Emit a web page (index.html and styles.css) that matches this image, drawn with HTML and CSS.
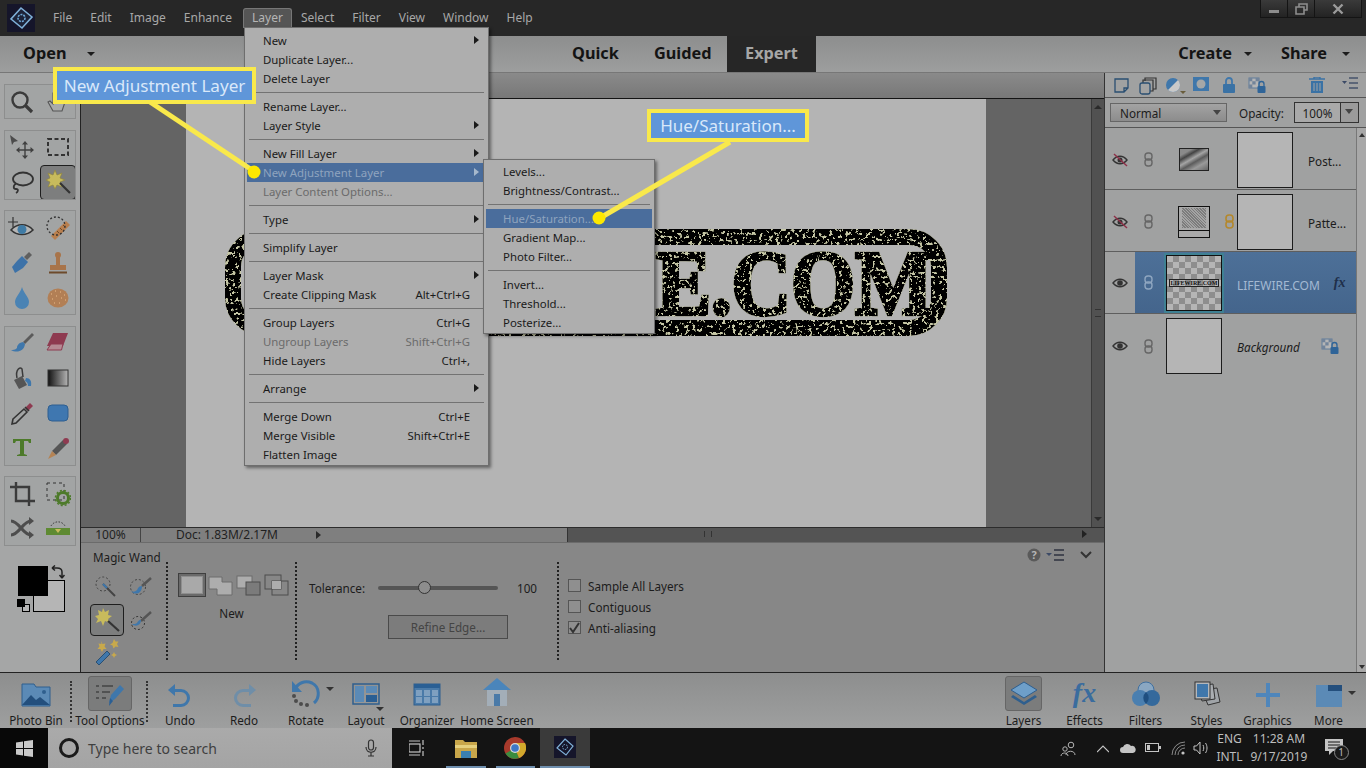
FILE: index.html
```html
<!DOCTYPE html>
<html lang="en">
<head>
<meta charset="utf-8">
<title>Photoshop Elements - Layer menu</title>
<link rel="stylesheet" href="styles.css">
</head>
<body>
<div class="app">
  <header class="titlebar">
    <div class="logo"><svg width="28" height="28" viewBox="0 0 28 28"><rect width="28" height="28" fill="#15152a"/><path d="M14 4 25 13 15 24 4 15Z" fill="#1c2238" stroke="#7fb0d8" stroke-width="1.6"/><circle cx="14.500" cy="14" r="3.500" fill="none" stroke="#6fa8d8" stroke-width="1.600" stroke-dasharray="2 1"/></svg></div>
    <nav class="mainmenu">
      <span class="mi">File</span><span class="mi">Edit</span><span class="mi">Image</span><span class="mi">Enhance</span><span class="mi active">Layer</span><span class="mi">Select</span><span class="mi">Filter</span><span class="mi">View</span><span class="mi">Window</span><span class="mi">Help</span>
    </nav>
    <div class="winctl">
      <span class="wb wb-min"><svg width="12" height="10" viewBox="0 0 12 10"><rect x="1" y="6" width="10" height="3" fill="#8d8d8d"/></svg></span>
      <span class="wb wb-max"><svg width="13" height="12" viewBox="0 0 13 12"><path d="M4 1h8v6H9V4H4Z M1 4h8v7H1Z" fill="none" stroke="#8d8d8d" stroke-width="1.600"/></svg></span>
      <span class="wb wb-close"><svg width="12" height="12" viewBox="0 0 12 12"><path d="M1.500 1.500 10.500 10.500M10.500 1.500 1.500 10.500" stroke="#9a9a9a" stroke-width="2.400"/></svg></span>
    </div>
  </header>

  <div class="modebar">
    <div class="open"><span class="mode-text">Open</span><span class="caret-d open-caret"></span></div>
    <div class="modes">
      <span class="mode mode-quick">Quick</span><span class="mode mode-guided">Guided</span><span class="mode expert">Expert</span>
    </div>
    <div class="create"><span class="mode-text">Create</span><span class="caret-d"></span></div>
    <div class="share"><span class="mode-text">Share</span><span class="caret-d"></span></div>
  </div>

  <div class="workspace">
    <aside class="toolbox">
      <div class="toolgroup">
        <span class="tool"><svg width="26" height="26" viewBox="0 0 26 26"><circle cx="11" cy="11" r="7.500" fill="#a8aaaa" stroke="#3b3b3b" stroke-width="2.400"/><path d="M16.500 16.500 23 23" stroke="#3b3b3b" stroke-width="3.200"/></svg></span>
        <span class="tool"><svg width="26" height="26" viewBox="0 0 26 26"><path d="M8 22 3 13l2-1 3 3V4h2v8l1-9h2l1 9 2-7h2l-1 9 3-1-3 9Z" fill="#a9abab" stroke="#555" stroke-width="1.100"/></svg></span>
      </div>
      <div class="toolgroup">
        <span class="tool"><svg width="26" height="26" viewBox="0 0 26 26"><path d="M1 1 9 7 5 8 3 11Z" fill="#4c4c4c"/><path d="M16 10v12M10 16h12" stroke="#404040" stroke-width="1.400"/><path d="M16 7l-3 3.500h6ZM16 25l-3-3.500h6ZM7 16l3.500-3v6ZM25 16l-3.500-3v6Z" fill="#404040"/></svg></span>
        <span class="tool"><svg width="26" height="26" viewBox="0 0 26 26"><rect x="3" y="5" width="20" height="16" fill="none" stroke="#333" stroke-width="2" stroke-dasharray="4 2.500"/></svg></span>
        <span class="tool"><svg width="26" height="26" viewBox="0 0 26 26"><ellipse cx="14" cy="10" rx="10" ry="6.500" fill="none" stroke="#333" stroke-width="1.800"/><path d="M7 15c-3 1-3 5 0 5s2 3 0 4" fill="none" stroke="#333" stroke-width="1.800"/></svg></span>
        <span class="tool selected"><svg width="26" height="26" viewBox="0 0 26 26"><path d="M10 1 12 6 17 4 15 9 20 11 15 13 17 18 12 16 10 20 8 16 3 18 5 13 1 11 5 9 3 4 8 6Z" fill="#c8bb5c" stroke="#8f8540" stroke-width=".7"/><path d="M15 14 25 24" stroke="#333" stroke-width="2.200"/></svg></span>
      </div>
      <div class="toolgroup">
        <span class="tool"><svg width="28" height="26" viewBox="0 0 28 26"><path d="M5 2v10M0 7h10" stroke="#333" stroke-width="1.200"/><path d="M3 15c6-7 16-7 22 0-6 6-16 6-22 0Z" fill="#b5b5b5" stroke="#333" stroke-width="1.500"/><circle cx="14" cy="14.500" r="4.500" fill="#3f7ba5"/></svg></span>
        <span class="tool"><svg width="26" height="26" viewBox="0 0 26 26"><path d="M6 21 21 6l4 4-15 15Z" fill="#b97f4e"/><path d="M12 16l2 2M15 13l2 2M18 10l2 2" stroke="#6d4a2b"/><circle cx="11" cy="11" r="9" fill="none" stroke="#333" stroke-dasharray="2 2" stroke-width="1.300"/></svg></span>
        <span class="tool"><svg width="26" height="26" viewBox="0 0 26 26"><path d="M15 7 20 2l3 3-5 5Z" fill="#5f5f5f"/><path d="M8 11 13 6l6 6-5 6-8 5-3-6Z" fill="#3d72a8"/></svg></span>
        <span class="tool"><svg width="26" height="26" viewBox="0 0 26 26"><circle cx="13" cy="5" r="3" fill="#a8744a"/><rect x="11" y="7" width="4" height="8" fill="#a8744a"/><rect x="5" y="15" width="16" height="5" fill="#a8744a"/><rect x="4" y="21.500" width="18" height="2" fill="#6d4a2b"/></svg></span>
        <span class="tool"><svg width="26" height="26" viewBox="0 0 26 26"><path d="M13 2C11 9 6 12 6 17a7 7 0 0 0 14 0C20 12 15 9 13 2Z" fill="#4a83b4"/></svg></span>
        <span class="tool"><svg width="28" height="26" viewBox="0 0 28 26"><ellipse cx="14" cy="13" rx="10.500" ry="9.500" fill="#b27f55"/><path d="M7 9h1M11 6h1M16 7h1M20 10h1M8 14h1M12 11h1M17 13h1M21 15h1M10 18h1M15 18h1" stroke="#d8a878" stroke-width="1.600"/></svg></span>
      </div>
      <div class="toolgroup">
        <span class="tool"><svg width="26" height="26" viewBox="0 0 26 26"><path d="M14 12 23 3l2 2-9 9Z" fill="#5b5b5b"/><path d="M14 12c-5 1-6 4-6 6-2 2-4 2-6 2 5 3 13 2 14-6Z" fill="#3f77ab"/></svg></span>
        <span class="tool"><svg width="26" height="26" viewBox="0 0 26 26"><path d="M8 3h15l-5 13H2Z" fill="#8e3a50"/><path d="M6 14h12l-1.500 6H2Z" fill="#b58a94" stroke="#8e3a50"/></svg></span>
        <span class="tool"><svg width="26" height="26" viewBox="0 0 26 26"><path d="M5 15 13 11l5 9-8 4Z" fill="#555"/><path d="M8 13C6 4 12 1 13 4l1 8" fill="none" stroke="#3b3b3b" stroke-width="1.500"/><path d="M17 13c4 0 6 3 5 8h-3c0-3-1-4-3-5Z" fill="#3f77ab"/></svg></span>
        <span class="tool"><svg width="22" height="18" viewBox="0 0 22 18"><defs><linearGradient id="gr"><stop offset="0" stop-color="#111"/><stop offset="1" stop-color="#b5b5b5"/></linearGradient></defs><rect x="1" y="1" width="20" height="16" fill="url(#gr)" stroke="#333"/></svg></span>
        <span class="tool"><svg width="26" height="26" viewBox="0 0 26 26"><path d="M16 8 21 3l3 3-5 5Z" fill="#8e3a50"/><path d="M16 7l4 4M4 19 15 9l3 3L7 23l-4 1Z" fill="none" stroke="#333" stroke-width="1.600"/></svg></span>
        <span class="tool"><svg width="24" height="20" viewBox="0 0 24 20"><rect x="2" y="2" width="20" height="16" rx="4" fill="#3f77b0" stroke="#2f5f90"/></svg></span>
        <span class="tool"><svg width="26" height="26" viewBox="0 0 26 26"><path d="M4 8V4h18v4h-2l-1-2h-4v13l3 1v1H8v-1l3-1V6H7L6 8Z" fill="#4d7a2a"/></svg></span>
        <span class="tool"><svg width="26" height="26" viewBox="0 0 26 26"><path d="M7 16 18 5l4 4L11 20Z" fill="#555"/><circle cx="21" cy="6" r="3" fill="#8e3a50"/><path d="M7 16l4 4-8 4Z" fill="#b58354"/></svg></span>
      </div>
      <div class="toolgroup">
        <span class="tool"><svg width="26" height="26" viewBox="0 0 26 26"><path d="M7 1v19h19M1 6h19v19" fill="none" stroke="#3b3b3b" stroke-width="2.400"/></svg></span>
        <span class="tool"><svg width="26" height="26" viewBox="0 0 26 26"><rect x="2" y="2" width="17" height="17" fill="none" stroke="#333" stroke-dasharray="3 3"/><circle cx="18" cy="17" r="5.500" fill="none" stroke="#4d7a2a" stroke-width="3"/><circle cx="18" cy="17" r="7.500" fill="none" stroke="#4d7a2a" stroke-width="1.600" stroke-dasharray="2 2"/></svg></span>
        <span class="tool"><svg width="26" height="26" viewBox="0 0 26 26"><path d="M2 5c8 0 12 14 20 14M2 19c8 0 12-14 20-14" fill="none" stroke="#4d4d4d" stroke-width="3.200"/><path d="M20 1l5 4-5 4ZM20 15l5 4-5 4Z" fill="#4d4d4d"/></svg></span>
        <span class="tool"><svg width="26" height="26" viewBox="0 0 26 26"><rect x="1" y="12" width="24" height="7" fill="#5e8a32"/><path d="M10 13h6l-3 4Z" fill="#c8bb5c"/><path d="M6 10a8 8 0 0 1 14 0" fill="none" stroke="#333" stroke-dasharray="1.500 1.500"/></svg></span>
      </div>
      <div class="swatches">
        <span class="bg-color"></span><span class="fg-color"></span>
        <span class="reset-a"></span><span class="reset-b"></span>
        <svg class="swap" width="14" height="14" viewBox="0 0 14 14"><path d="M1 3h5M1 3l3-2.500M1 3l3 2.500M11 13V7M11 13l-2.500-3M11 13l2.500-3M6 3c3 0 5 1 5 4" fill="none" stroke="#222" stroke-width="1.500"/></svg>
      </div>
    </aside>

    <main class="center">
      <div class="tabstrip"></div>
      <div class="canvas-row">
        <div class="canvas">
          <div class="image">
            <svg class="stamp" width="800" height="429" viewBox="0 0 800 429">
              <defs>
                <filter id="distress" filterUnits="userSpaceOnUse" x="0" y="0" width="800" height="429">
                  <feTurbulence type="fractalNoise" baseFrequency=".3" numOctaves="4" seed="7" result="n"/>
                  <feColorMatrix in="n" type="matrix" values="0 0 0 0 0  0 0 0 0 0  0 0 0 0 0  0 0 0 -14 9.300" result="a"/>
                  <feComposite in="SourceGraphic" in2="a" operator="in" result="ink"/>
                  <feFlood flood-color="#c6c7a6" result="c"/>
                  <feComposite in="c" in2="SourceAlpha" operator="in" result="paper"/>
                  <feMerge><feMergeNode in="paper"/><feMergeNode in="ink"/></feMerge>
                </filter>
              </defs>
              <g filter="url(#distress)">
                <rect x="47" y="138" width="706" height="91" rx="30" class="stamp-frame"/>
                <text x="470" y="215" textLength="277" lengthAdjust="spacingAndGlyphs" class="stamp-text">E.COM</text>
              </g>
            </svg>
          </div>
        </div>
        <div class="vscroll"><span class="v-up"></span><span class="v-grip"></span><span class="v-down"></span></div>
      </div>
      <div class="statusbar">
        <span class="zoom-box">100%</span>
        <span class="doc-box">Doc: 1.83M/2.17M</span>
        <span class="doc-arrow"></span>
        <div class="hscroll"><span class="h-grip"></span><span class="h-arrow"></span></div>
      </div>
      <section class="options">
        <div class="opt-section opt-wand">
          <div class="opt-title">Magic Wand</div>
          <div class="wand-grid">
            <span class="wand"><svg width="24" height="24" viewBox="0 0 24 24"><circle cx="8" cy="8" r="7" fill="none" stroke="#444" stroke-dasharray="2 2"/><path d="M8 8 20 20" stroke="#444" stroke-width="2"/><path d="M8 8l4 4" stroke="#3f77ab" stroke-width="2"/></svg></span>
            <span class="wand"><svg width="24" height="24" viewBox="0 0 24 24"><circle cx="9" cy="11" r="7.500" fill="none" stroke="#444" stroke-dasharray="2 2"/><path d="M13 10 22 2" stroke="#555" stroke-width="2.400"/><path d="M13 10c-4 0-4 3-5 4-2 2-4 2-6 1 3 4 11 4 11-5Z" fill="#3f77ab"/></svg></span>
            <span class="wand selected"><svg width="26" height="26" viewBox="0 0 26 26"><path d="M9 1l2 4 4-2-1 5 4 1-4 3 2 4-5-2-2 5-2-5-5 2 2-4-3-3 4-1-1-5 4 2Z" fill="#c8bb5c"/><path d="M14 14 25 24" stroke="#333" stroke-width="2.200"/></svg></span>
            <span class="wand"><svg width="24" height="24" viewBox="0 0 24 24"><circle cx="9" cy="15" r="6.500" fill="none" stroke="#333" stroke-dasharray="2 2"/><path d="M12 13 22 4" stroke="#555" stroke-width="2.400"/><path d="M12 12c-3 0-3 2-4 3-1 1-3 1-5 1 3 3 9 2 9-4Z" fill="#3f77ab"/></svg></span>
            <span class="wand"><svg width="28" height="28" viewBox="0 0 28 28"><path d="M3 24 14 13l3 3L6 27Z" fill="#3f77ab" stroke="#2a4f72"/><path d="M8 3l1.500 3 3-.5-1 3 2 2.500-3 0-1.500 3-1.500-3-3 0 2-2.500-1-3 3 .5ZM21 1l1.500 2.500 3 0-1.500 2.500 1.500 3-3-.5-2 2-1-3-2.500-1 2.500-1.500ZM21 14l1 2 2 1-2 1-1 2-1-2-2-1 2-1Z" fill="#c8a94c"/></svg></span>
          </div>
        </div>
        <div class="opt-section opt-mode">
          <div class="mode-icons">
            <span class="mode-sel"><span class="mode-square"></span></span>
            <svg width="26" height="22" viewBox="0 0 26 22"><path d="M1 3h13v5h10v13H9v-6H1Z" fill="#adadad" stroke="#6d6d6d"/></svg>
            <svg width="26" height="22" viewBox="0 0 26 22"><rect x="1" y="2" width="15" height="12" fill="#adadad" stroke="#6d6d6d"/><rect x="10" y="8" width="14" height="13" fill="#7b7b7b" stroke="#4c4c4c"/></svg>
            <svg width="26" height="22" viewBox="0 0 26 22"><rect x="1" y="1" width="16" height="14" fill="none" stroke="#4c4c4c"/><rect x="8" y="7" width="16" height="14" fill="none" stroke="#4c4c4c"/><rect x="8" y="7" width="9" height="8" fill="#adadad"/></svg>
          </div>
          <div class="mode-label">New</div>
        </div>
        <div class="opt-section opt-tol">
          <div class="tol-row">
            <span class="tol-label">Tolerance:</span>
            <span class="slider"><span class="knob"></span></span>
            <span class="tol-val">100</span>
          </div>
          <button class="refine" type="button">Refine Edge...</button>
        </div>
        <div class="opt-section opt-checks">
          <label class="chk"><span class="box"></span>Sample All Layers</label>
          <label class="chk"><span class="box"></span>Contiguous</label>
          <label class="chk"><span class="box checked"><svg width="13" height="13" viewBox="0 0 13 13"><path d="M2 7 5 11 11 2" fill="none" stroke="#333" stroke-width="2"/></svg></span>Anti-aliasing</label>
        </div>
        <div class="opt-end">
          <svg width="14" height="14" viewBox="0 0 14 14"><circle cx="7" cy="7" r="6.500" fill="#5a5a5a"/><text x="7" y="11" class="qmark">?</text></svg>
          <svg width="20" height="14" viewBox="0 0 20 14"><path d="M0 5h6l-3 3Z" fill="#3c4a66"/><path d="M8 2h10M8 7h10M8 12h10" stroke="#2f3340" stroke-width="1.400"/></svg>
          <svg class="chev" width="12" height="8" viewBox="0 0 12 8"><path d="M1 1l5 5 5-5" fill="none" stroke="#333" stroke-width="2"/></svg>
        </div>
      </section>
    </main>

    <aside class="layers">
      <div class="panel-tools">
        <svg class="pt1" width="16" height="16" viewBox="0 0 16 16"><path d="M2 2h13v9l-4 4H2ZM15 11h-4v4" fill="none" stroke="#2a4f72" stroke-width="1.300"/></svg>
        <svg class="pt2" width="18" height="18" viewBox="0 0 18 18"><path d="M6 4V1h11v11h-3M4 6V3h10v11h-3" fill="none" stroke="#333" stroke-width="1.200"/><rect x="1" y="6" width="10" height="11" rx="2" fill="#a2a3a3" stroke="#2a4f72" stroke-width="1.300"/></svg>
        <svg class="pt3" width="22" height="18" viewBox="0 0 22 18"><circle cx="8" cy="8" r="7" fill="#3f77ab"/><path d="M3 13 13 3a7 7 0 0 1-10 10Z" fill="#c9c9c9"/><path d="M15 14h6l-3 3Z" fill="#695d3c"/></svg>
        <svg class="pt4" width="16" height="14" viewBox="0 0 16 14"><rect width="16" height="14" fill="#3f77ab"/><circle cx="8" cy="7" r="4.500" fill="#a5a7a7"/></svg>
        <svg class="pt5" width="14" height="16" viewBox="0 0 14 16"><path d="M4 7V4a3 3 0 0 1 6 0v3" fill="none" stroke="#3f77ab" stroke-width="1.800"/><rect x="1" y="7" width="12" height="9" rx="1" fill="#3a72a5"/></svg>
        <svg class="pt6" width="18" height="16" viewBox="0 0 18 16"><rect x="1" y="1" width="10" height="10" fill="#b5b5b5" stroke="#5f7d9b"/><path d="M1 1h3.300v3.300H1ZM7.600 1H11v3.300H7.600ZM4.300 4.300h3.300v3.300H4.300ZM1 7.600h3.300V11H1Z" fill="#72849a"/><path d="M11 9V7a2.500 2.500 0 0 1 5 0v2" fill="none" stroke="#2f6498" stroke-width="1.300"/><rect x="9.500" y="9" width="8" height="7" rx="1" fill="#2f6498"/></svg>
        <svg class="pt7" width="16" height="16" viewBox="0 0 16 16"><path d="M0 2h16M5 2V0h6v2" stroke="#3a72a5" stroke-width="1.400" fill="none"/><path d="M2 4h12v12H2Z" fill="#3a72a5"/><path d="M5 6v8M8 6v8M11 6v8" stroke="#a2a3a3"/></svg>
        <svg class="pt8" width="16" height="12" viewBox="0 0 16 12"><path d="M0 4h5L2.500 7Z" fill="#3c4a66"/><path d="M7 1h9M7 6h9M7 11h9" stroke="#46536b" stroke-width="1.300"/></svg>
      </div>
      <div class="blend-row">
        <span class="select">Normal<span class="sel-caret"></span></span>
        <span class="op-label">Opacity:</span>
        <span class="op-input">100%</span>
        <span class="op-drop"><span class="sel-caret"></span></span>
      </div>
      <div class="layer-list">
        <div class="rows">
          <div class="layer-row">
            <span class="eye-cell"><svg width="16" height="14" viewBox="0 0 16 14"><path d="M1 7c4-5 10-5 14 0-4 5-10 5-14 0Z" fill="none" stroke="#333" stroke-width="1.400"/><circle cx="8" cy="7" r="2.500" fill="#333"/><path d="M2 1 15 13" stroke="#8e3048" stroke-width="1.400"/></svg></span>
            <span class="chain-cell"><svg width="9" height="15" viewBox="0 0 9 15"><rect x="1" y="1" width="7" height="7" rx="3" fill="none" stroke="#666" stroke-width="1.400"/><rect x="1" y="7" width="7" height="7" rx="3" fill="none" stroke="#666" stroke-width="1.400"/></svg></span>
            <span class="thumb-cell"><span class="thumb-post"></span></span>
            <span class="link-cell"></span>
            <span class="mask-thumb"></span>
            <span class="lname">Post...</span>
          </div>
          <div class="layer-row">
            <span class="eye-cell"><svg width="16" height="14" viewBox="0 0 16 14"><path d="M1 7c4-5 10-5 14 0-4 5-10 5-14 0Z" fill="none" stroke="#333" stroke-width="1.400"/><circle cx="8" cy="7" r="2.500" fill="#333"/><path d="M2 1 15 13" stroke="#8e3048" stroke-width="1.400"/></svg></span>
            <span class="chain-cell"><svg width="9" height="15" viewBox="0 0 9 15"><rect x="1" y="1" width="7" height="7" rx="3" fill="none" stroke="#666" stroke-width="1.400"/><rect x="1" y="7" width="7" height="7" rx="3" fill="none" stroke="#666" stroke-width="1.400"/></svg></span>
            <span class="thumb-cell"><span class="thumb-pat"><span class="pat-noise"></span><span class="pat-bar"></span></span></span>
            <span class="link-cell"><svg width="9" height="15" viewBox="0 0 9 15"><rect x="1" y="1" width="7" height="7" rx="3" fill="none" stroke="#b4882c" stroke-width="1.600"/><rect x="1" y="7" width="7" height="7" rx="3" fill="none" stroke="#b4882c" stroke-width="1.600"/></svg></span>
            <span class="mask-thumb"></span>
            <span class="lname">Patte...</span>
          </div>
          <div class="layer-row active">
            <span class="eye-cell lit"><svg width="16" height="12" viewBox="0 0 16 12"><path d="M1 6c4-5 10-5 14 0-4 5-10 5-14 0Z" fill="none" stroke="#333" stroke-width="1.400"/><circle cx="8" cy="6" r="2.800" fill="#333"/></svg></span>
            <span class="chain-cell"><svg width="9" height="15" viewBox="0 0 9 15"><rect x="1" y="1" width="7" height="7" rx="3" fill="none" stroke="#8fa6c0" stroke-width="1.400"/><rect x="1" y="7" width="7" height="7" rx="3" fill="none" stroke="#8fa6c0" stroke-width="1.400"/></svg></span>
            <span class="thumb-cell"><span class="thumb-check"><span class="mini">LIFEWIRE.COM</span></span></span>
            <span class="link-cell"></span>
            <span class="lname lname-active">LIFEWIRE.COM</span>
            <span class="fx">fx</span>
          </div>
          <div class="layer-row">
            <span class="eye-cell"><svg width="16" height="12" viewBox="0 0 16 12"><path d="M1 6c4-5 10-5 14 0-4 5-10 5-14 0Z" fill="none" stroke="#333" stroke-width="1.400"/><circle cx="8" cy="6" r="2.800" fill="#333"/></svg></span>
            <span class="chain-cell"><svg width="9" height="15" viewBox="0 0 9 15"><rect x="1" y="1" width="7" height="7" rx="3" fill="none" stroke="#666" stroke-width="1.400"/><rect x="1" y="7" width="7" height="7" rx="3" fill="none" stroke="#666" stroke-width="1.400"/></svg></span>
            <span class="thumb-cell"><span class="thumb-bg"></span></span>
            <span class="link-cell"></span>
            <span class="lname lname-bg">Background</span>
            <svg class="bg-lock" width="18" height="16" viewBox="0 0 18 16"><rect x="1" y="1" width="10" height="10" fill="#b5b5b5" stroke="#5f7d9b"/><path d="M1 1h3.300v3.300H1ZM7.600 1H11v3.300H7.600ZM4.300 4.300h3.300v3.300H4.300ZM1 7.600h3.300V11H1Z" fill="#72849a"/><path d="M11 9V7a2.500 2.500 0 0 1 5 0v2" fill="none" stroke="#2f6498" stroke-width="1.300"/><rect x="9.500" y="9" width="8" height="7" rx="1" fill="#2f6498"/></svg>
          </div>
        </div>
        <div class="layers-scroll"><span class="ls-up"></span><span class="ls-down"></span></div>
      </div>
    </aside>
  </div>

  <footer class="bottombar">
    <div class="bb bb-photo"><svg width="30" height="24" viewBox="0 0 30 24"><path d="M1 3V1h12l2 3h14v19H1Z" fill="#5b8ab6" stroke="#2f5f8e"/><path d="M1 22 10 12l5 5 4-3 10 8Z" fill="#234f7d"/><circle cx="23" cy="9" r="2" fill="#2f5f8e"/></svg><span>Photo Bin</span></div>
    <div class="bb bb-tool"><span class="bb-sel"><svg width="30" height="24" viewBox="0 0 30 24"><path d="M1 4h3M1 10h3M1 16h3M7 4h11M7 10h8M7 16h4" stroke="#444" stroke-width="1.500"/><path d="M14 21l2-8 9-10 4 4-9 10Z" fill="#3f77ab"/><path d="M14 24l4-5-3-3Z" fill="#2a5f94"/></svg></span><span>Tool Options</span></div>
    <div class="bb bb-undo"><svg width="26" height="24" viewBox="0 0 26 24"><path d="M8 1 1 7l7 6V9h6a6 6 0 0 1 0 12H6v3h8a9 9 0 0 0 0-18H8Z" fill="#3f77ab"/></svg><span>Undo</span></div>
    <div class="bb bb-redo"><svg width="26" height="24" viewBox="0 0 26 24"><path d="M18 1l7 6-7 6V9h-6a6 6 0 0 0 0 12h8v3h-8a9 9 0 0 1 0-18h6Z" fill="#6f8ea8"/></svg><span>Redo</span></div>
    <div class="bb bb-rotate"><span class="with-caret"><svg width="32" height="28" viewBox="0 0 32 28"><path d="M5 11C7 4 15 1 22 4c8 4 8 15 2 20" fill="none" stroke="#3f77ab" stroke-width="3"/><path d="M2 2v11h10Z" fill="#3f77ab"/><circle cx="4" cy="17" r="2" fill="#4c4c4c"/><circle cx="6" cy="22" r="2" fill="#4c4c4c"/><circle cx="11" cy="25" r="2" fill="#4c4c4c"/><circle cx="17" cy="26" r="2" fill="#4c4c4c"/></svg><span class="caret-s rot-caret"></span></span><span>Rotate</span></div>
    <div class="bb bb-layout"><span class="with-caret"><svg width="28" height="24" viewBox="0 0 28 24"><rect x="1" y="1" width="26" height="20" fill="none" stroke="#2f5f8e" stroke-width="1.500"/><rect x="3" y="3" width="9" height="16" fill="#5b8ab6"/><rect x="14" y="3" width="11" height="7" fill="#5b8ab6"/><rect x="14" y="12" width="11" height="7" fill="#2a5f94"/></svg><span class="caret-s lay-caret"></span></span><span>Layout</span></div>
    <div class="bb bb-org"><svg width="28" height="24" viewBox="0 0 28 24"><rect x="1" y="1" width="26" height="21" fill="#4a7aa8" stroke="#2f5f8e"/><rect x="1" y="1" width="26" height="4" fill="#2a5f94"/><path d="M3 7h6v6H3ZM11 7h6v6h-6ZM19 7h6v6h-6ZM3 14h6v6H3ZM11 14h6v6h-6ZM19 14h6v6h-6Z" fill="#7fa0c0"/></svg><span>Organizer</span></div>
    <div class="bb bb-home"><svg width="30" height="30" viewBox="0 0 30 30"><path d="M1 13 15 1l14 12Z" fill="#4a85bb"/><path d="M5 13h20v16H5Z" fill="#a3aeb8"/><rect x="12" y="17" width="6" height="12" fill="#4a7aa8"/></svg><span>Home Screen</span></div>
    <div class="bb-spacer"></div>
    <div class="bb"><span class="bb-sel bb-sel-layers"><svg width="28" height="26" viewBox="0 0 28 26"><path d="M14 1 27 9 14 17 1 9Z" fill="#6e9fc9" stroke="#2f5f8e"/><path d="M3 14l11 7 11-7 2 2-13 8-13-8Z" fill="#2f5f8e"/></svg></span><span>Layers</span></div>
    <div class="bb"><span class="fx-big">fx</span><span>Effects</span></div>
    <div class="bb"><svg width="28" height="26" viewBox="0 0 28 26"><circle cx="14" cy="9" r="8" fill="#8aa7c2" stroke="#3f6f9f"/><circle cx="8" cy="17" r="8" fill="#4a7fb0"/><circle cx="20" cy="17" r="8" fill="#34699c"/><path d="M14 11a8 8 0 0 1 0 12 8 8 0 0 1 0-12Z" fill="#1f4f80"/></svg><span>Filters</span></div>
    <div class="bb"><svg width="28" height="26" viewBox="0 0 28 26"><path d="M9 9 24 7l3 14-12 3Z" fill="#a0a4a8" stroke="#333"/><path d="M5 5 20 3l2 15-13 2Z" fill="#a9adb1" stroke="#333"/><rect x="2" y="1" width="15" height="17" fill="#b4b7ba" stroke="#333"/><rect x="4" y="3" width="11" height="13" fill="#3f77ab"/></svg><span>Styles</span></div>
    <div class="bb"><svg width="24" height="24" viewBox="0 0 24 24"><path d="M10 0h4v10h10v4H14v10h-4V14H0v-4h10Z" fill="#4f86bb"/></svg><span>Graphics</span></div>
    <div class="bb"><span class="with-caret"><svg width="26" height="22" viewBox="0 0 26 22"><rect width="26" height="22" fill="#5b8ab6"/><rect x="12" width="14" height="6" fill="#244f7d"/></svg><span class="caret-s more-caret"></span></span><span>More</span></div>
  </footer>

  <div class="taskbar">
    <div class="start"><svg width="17" height="17" viewBox="0 0 17 17"><path d="M0 2.500 7 1.500V8H0ZM8 1.300 17 0V8H8ZM0 9h7v6.500L0 14.500ZM8 9h9v8l-9-1.300Z" fill="#c9c9c9"/></svg></div>
    <div class="search">
      <span class="cortana"></span>
      <span class="search-text">Type here to search</span>
      <svg class="mic" width="12" height="18" viewBox="0 0 12 18"><rect x="3.500" y="1" width="5" height="10" rx="2.500" fill="none" stroke="#333" stroke-width="1.200"/><path d="M1 8c0 7 10 7 10 0M6 13v4M3 17h6" fill="none" stroke="#333" stroke-width="1.200"/></svg>
    </div>
    <div class="tb-apps">
      <span class="tb-app"><svg width="16" height="16" viewBox="0 0 16 16"><rect x="0" y="4" width="11" height="8" fill="none" stroke="#c4c4c4" stroke-width="1.200"/><path d="M0 1h11M0 15h11M14 0v5M14 7v2M14 11v5" stroke="#c4c4c4" stroke-width="1.200"/></svg></span>
      <span class="tb-app under"><svg width="22" height="20" viewBox="0 0 22 20"><path d="M0 2h8l2 2h12v16H0Z" fill="#c8a64a"/><rect x="0" y="7" width="22" height="3" fill="#e5d07e"/><rect x="6" y="13" width="10" height="7" fill="#3a7fb0"/></svg></span>
      <span class="tb-app under"><svg width="22" height="22" viewBox="0 0 22 22"><circle cx="11" cy="11" r="11" fill="#a83a2c"/><path d="M11 11 1.500 16.500A11 11 0 0 0 15 21Z" fill="#3b8c3f"/><path d="M11 11l4 10A11 11 0 0 0 21 6H11Z" fill="#d2a92c"/><circle cx="11" cy="11" r="5" fill="#d8d8d8"/><circle cx="11" cy="11" r="3.800" fill="#3d78c8"/></svg></span>
      <span class="tb-app current"><svg width="22" height="22" viewBox="0 0 22 22"><rect width="22" height="22" fill="#15152a"/><path d="M11 3 19 10 12 19 3 12Z" fill="none" stroke="#7fb0d8" stroke-width="1.200"/><circle cx="11" cy="11" r="2.500" fill="none" stroke="#7fb0d8" stroke-dasharray="1.500 1"/></svg></span>
    </div>
    <div class="tray">
      <svg class="tr-people" width="16" height="16" viewBox="0 0 16 16"><circle cx="11" cy="4" r="2.800" fill="none" stroke="#b5b5b5"/><path d="M6 14c0-5 9-5 9 0" fill="none" stroke="#b5b5b5"/><circle cx="5" cy="8" r="2.200" fill="none" stroke="#b5b5b5"/><path d="M1 15c0-4 7-4 7 0" fill="none" stroke="#b5b5b5"/></svg>
      <svg class="tr-up" width="12" height="8" viewBox="0 0 12 8"><path d="M0 7l6-6 6 6" fill="none" stroke="#c4c4c4" stroke-width="1.200"/></svg>
      <svg class="tr-cloud" width="16" height="10" viewBox="0 0 16 10"><path d="M3 10a3 3 0 0 1 0-6 4.500 4.500 0 0 1 8-1 3.500 3.500 0 0 1 2 7Z" fill="#c4c4c4"/></svg>
      <svg class="tr-bat" width="16" height="9" viewBox="0 0 16 9"><rect x=".5" y=".5" width="13" height="8" fill="none" stroke="#c4c4c4"/><rect x="2" y="2" width="3" height="5" fill="#c4c4c4"/><rect x="14" y="3" width="2" height="3" fill="#c4c4c4"/></svg>
      <svg class="tr-wifi" width="14" height="14" viewBox="0 0 14 14"><path d="M1 14A13 13 0 0 1 14 1M4 14A10 10 0 0 1 14 4M7 14a7 7 0 0 1 7-7" fill="none" stroke="#8a8a8a"/><circle cx="12" cy="12" r="1.600" fill="#c4c4c4"/></svg>
      <svg class="tr-vol" width="16" height="14" viewBox="0 0 16 14"><path d="M1 5h2.500L7 1v12L3.500 9H1Z" fill="none" stroke="#c4c4c4"/><path d="M10 4c1 2 1 4 0 6M12.500 2c2 3 2 7 0 10" fill="none" stroke="#c4c4c4"/></svg>
      <div class="tr-lang"><span>ENG</span><span>INTL</span></div>
      <div class="tr-clock"><span>11:28 AM</span><span>9/17/2019</span></div>
      <span class="tr-note"><svg width="18" height="16" viewBox="0 0 18 16"><path d="M0 0h18v12H8l-4 4v-4H0Z" fill="#c4c4c4"/><path d="M3 3h12M3 6h12M3 9h8" stroke="#141414"/></svg><span class="note-badge">1</span></span>
    </div>
  </div>

  <div class="layer-tab">Layer</div>
  <div class="menu layer-menu">
    <div class="row sub">New</div>
    <div class="row">Duplicate Layer...</div>
    <div class="row">Delete Layer</div>
    <div class="sep"></div>
    <div class="row">Rename Layer...</div>
    <div class="row sub">Layer Style</div>
    <div class="sep"></div>
    <div class="row sub">New Fill Layer</div>
    <div class="row sub hl">New Adjustment Layer</div>
    <div class="row off">Layer Content Options...</div>
    <div class="sep"></div>
    <div class="row sub">Type</div>
    <div class="sep"></div>
    <div class="row">Simplify Layer</div>
    <div class="sep"></div>
    <div class="row sub">Layer Mask</div>
    <div class="row">Create Clipping Mask<kbd>Alt+Ctrl+G</kbd></div>
    <div class="sep"></div>
    <div class="row">Group Layers<kbd>Ctrl+G</kbd></div>
    <div class="row off">Ungroup Layers<kbd>Shift+Ctrl+G</kbd></div>
    <div class="row">Hide Layers<kbd>Ctrl+,</kbd></div>
    <div class="sep"></div>
    <div class="row sub">Arrange</div>
    <div class="sep"></div>
    <div class="row">Merge Down<kbd>Ctrl+E</kbd></div>
    <div class="row">Merge Visible<kbd>Shift+Ctrl+E</kbd></div>
    <div class="row">Flatten Image</div>
  </div>
  <div class="menu adj-menu">
    <div class="row">Levels...</div>
    <div class="row">Brightness/Contrast...</div>
    <div class="sep"></div>
    <div class="row hl">Hue/Saturation...</div>
    <div class="row">Gradient Map...</div>
    <div class="row">Photo Filter...</div>
    <div class="sep"></div>
    <div class="row">Invert...</div>
    <div class="row">Threshold...</div>
    <div class="row">Posterize...</div>
  </div>

  <svg class="annot" width="1366" height="768" viewBox="0 0 1366 768">
    <path d="M150 102 255 172" class="annot-line"/><circle cx="254" cy="172" r="6.500" class="annot-dot"/>
    <path d="M730 142 600 218" class="annot-line"/><circle cx="599" cy="218" r="6.500" class="annot-dot"/>
  </svg>
  <div class="callout callout-a">New Adjustment Layer</div>
  <div class="callout callout-b">Hue/Saturation...</div>
</div>
</body>
</html>
```
FILE: styles.css
```css
* { box-sizing: border-box; }
html, body { margin: 0; height: 100%; }
body { background: #333; font-family: "Noto Sans", "Open Sans", sans-serif; font-size: 11.700px; color: #1c1c1c; overflow: hidden; }
.app { position: relative; width: 1366px; height: 768px; display: flex; flex-direction: column; overflow: hidden; }

/* title bar */
.titlebar { height: 36px; background: #272727; display: flex; align-items: flex-start; flex: none; }
.logo { width: 28px; height: 28px; margin: 4px 9px 0 7px; }
.logo svg { display: block; }
.mainmenu { display: flex; margin-top: 9px; color: #a8a8a8; line-height: 17px; font-size: 12px; }
.mi { padding: 0 9px; }
.mi.active { visibility: hidden; padding: 0 10px; }
.winctl { margin-left: auto; margin-right: 4px; display: flex; height: 18px; border: 1px solid #141414; border-top: 0; background: linear-gradient(#3a3a3a, #232323); }
.wb { display: flex; align-items: center; justify-content: center; border-right: 1px solid #141414; }
.wb-min { width: 27px; } .wb-max { width: 27px; } .wb-close { width: 46px; border-right: 0; }

/* mode bar */
.modebar { height: 36px; flex: none; display: flex; align-items: center; background: linear-gradient(#8d8e8e, #9d9e9e); font-weight: 700; font-size: 16.300px; color: #141414; position: relative; }
.mode-text { padding-bottom: 2px; }
.open { display: flex; align-items: center; width: 572px; padding-left: 23px; }
.open-caret { margin-left: 21px; }
.caret-d { width: 0; height: 0; border: 4px solid transparent; border-top: 4px solid #1c1c1c; border-bottom: 0; display: inline-block; }
.modes { display: flex; align-items: center; height: 36px; }
.mode { display: flex; align-items: center; height: 36px; padding-bottom: 2px; }
.mode-quick { width: 82px; }
.mode-guided { width: 73px; }
.expert { width: 89px; background: #262626; color: #a6a6a6; justify-content: center; }
.create { margin-left: auto; display: flex; align-items: center; gap: 12px; margin-right: 29px; }
.share { display: flex; align-items: center; gap: 15px; margin-right: 16px; }

/* workspace */
.workspace { flex: 1; display: flex; min-height: 0; border-top: 1px solid #777; }
.toolbox { width: 81px; flex: none; background: #a5a6a6; border-right: 1px solid #222; padding: 11px 4px 0; display: flex; flex-direction: column; gap: 10.6px; }
.toolgroup { width: 72px; display: grid; grid-template-columns: 1fr 1fr; grid-auto-rows: 35px; outline: 1px solid #8d8e8e; outline-offset: -1px; background: #a2a4a4; }
.tool { display: flex; align-items: center; justify-content: center; }
.selected { background: #7d7e7e; border: 1px solid #1e1e1e; border-radius: 4px; }
.swatches { position: relative; height: 60px; margin-top: 1px; }
.fg-color { position: absolute; left: 14px; top: 8px; width: 30px; height: 30px; background: #000; }
.bg-color { position: absolute; left: 29px; top: 22px; width: 32px; height: 32px; background: #b5b5b5; border: 1px solid #000; }
.reset-a { position: absolute; left: 13px; top: 41px; width: 8px; height: 8px; background: #000; z-index: 1; }
.reset-b { position: absolute; left: 18px; top: 46px; width: 8px; height: 8px; background: #b5b5b5; border: 1px solid #000; }
.swap { position: absolute; left: 47px; top: 7px; }

/* center */
.center { flex: 1; min-width: 0; display: flex; flex-direction: column; }
.tabstrip { height: 26px; flex: none; background: linear-gradient(#8a8a8a, #787878); border-bottom: 1px solid #141414; }
.canvas-row { flex: 1; display: flex; min-height: 0; }
.canvas { width: 1011px; background: #646464; padding-left: 105px; flex: none; border-right: 1px solid #3a3a3a; }
.image { position: relative; width: 800px; height: 100%; background: #b4b4b4; }
.stamp { position: absolute; left: 0; top: 0; display: block; }
.stamp-frame { fill: none; stroke: #000; stroke-width: 16; }
.stamp-text { font-family: "Liberation Serif", serif; font-weight: 700; font-size: 92px; fill: #000; stroke: #000; stroke-width: 4.500; }
.vscroll { flex: 1; background: #515151; display: flex; flex-direction: column; align-items: center; justify-content: space-between; padding: 6px 0; }
.v-up { border: 4px solid transparent; border-bottom: 4px solid #2a2a2a; border-top: 0; }
.v-down { border: 4px solid transparent; border-top: 4px solid #2a2a2a; border-bottom: 0; }
.v-grip { width: 6px; height: 8px; border-top: 1px solid #333; border-bottom: 1px solid #333; }
.statusbar { height: 15px; flex: none; display: flex; background: #7f7f7f; border-top: 1px solid #2c2c2c; line-height: 14px; color: #1f1f1f; font-size: 12px; }
.zoom-box { width: 60px; text-align: center; border-right: 1px solid #444; padding-left: 0; }
.doc-box { padding-left: 35px; width: 175px; }
.doc-arrow { align-self: center; margin-left: 0; width: 0; height: 0; border: 4px solid transparent; border-left: 5px solid #2a2a2a; border-right: 0; }
.hscroll { margin-left: 246px; flex: 1; background: #545454; border-left: 1px solid #333; position: relative; }
.h-grip { position: absolute; left: 136px; top: 3px; width: 8px; height: 6px; border-left: 1px solid #333; border-right: 1px solid #333; }
.h-arrow { position: absolute; right: 17px; top: 2px; border: 4px solid transparent; border-left: 5px solid #222; border-right: 0; }

/* tool options */
.options { height: 130px; flex: none; display: flex; background: #878787; position: relative; border-top: 1px solid #6b6b6b; }
.opt-section { position: relative; height: 98px; margin-top: 19px; }
.opt-section:not(.opt-checks) { border-right: 2px dotted #222; }
.opt-wand { width: 87px; }
.opt-title { position: absolute; left: 12px; top: -13px; line-height: 16px; white-space: nowrap; }
.wand-grid { margin: 10px 0 0 9px; display: grid; grid-template-columns: 34px 34px; grid-auto-rows: 32px; }
.wand { display: flex; align-items: center; justify-content: center; }
.opt-mode { width: 129px; }
.mode-icons { display: flex; align-items: center; gap: 2px; padding: 11px 0 0 10px; }
.mode-sel { width: 28px; height: 24px; background: #6a6a6a; border: 1px solid #3f3f3f; padding: 2px; display: block; }
.mode-square { display: block; width: 100%; height: 100%; background: #a9a9a9; border: 1px solid #8e8e8e; }
.mode-label { text-align: center; margin-top: 8px; line-height: 16px; padding-left: 0; }
.opt-tol { width: 262px; }
.tol-row { display: flex; align-items: center; padding: 6px 0 0 12px; height: 45px; }
.tol-label { width: 69px; }
.slider { position: relative; width: 120px; height: 4px; background: #555; border-radius: 2px; }
.knob { position: absolute; left: 40px; top: -5px; width: 13px; height: 13px; border-radius: 50%; background: #8d8d8d; border: 1px solid #333; }
.tol-val { margin-left: 19px; }
.refine { display: block; margin: 8px 0 0 91px; width: 120px; height: 24px; background: #7c7c7c; border: 1px solid #4a4a4a; color: #444; font: 11.700px "Noto Sans", sans-serif; padding: 0; }
.opt-checks { padding: 15px 0 0 9px; display: flex; flex-direction: column; gap: 4px; }
.chk { display: flex; align-items: center; gap: 7px; height: 17px; }
.box { width: 13px; height: 13px; background: #8f8f8f; border: 1px solid #555; display: block; flex: none; }
.box svg { display: block; margin: -1px; }
.opt-end { position: absolute; right: 12px; top: 5px; display: flex; align-items: center; gap: 5px; }
.chev { margin-left: 9px; }
.qmark { font: 700 11px "Noto Sans", sans-serif; fill: #b5b5b5; text-anchor: middle; }

/* layers panel */
.layers { width: 262px; flex: none; background: #a0a1a1; border-left: 1px solid #333; display: flex; flex-direction: column; }
.panel-tools { height: 25px; flex: none; position: relative; display: flex; align-items: center; border-bottom: 1px solid #555; }
.panel-tools svg { position: absolute; top: 4px; }
.pt1 { left: 8px; } .pt2 { left: 34px; } .pt3 { left: 60px; } .pt4 { left: 88px; } .pt5 { left: 117px; } .pt6 { left: 143px; } .pt7 { left: 204px; } .pt8 { left: 237px; }
.blend-row { height: 30px; flex: none; display: flex; align-items: center; padding-left: 5px; border-bottom: 1px solid #555; }
.select { position: relative; width: 117px; height: 19px; line-height: 18px; padding-left: 9px; background: linear-gradient(#a3a3a3, #8c8c8c); border: 1px solid #666; }
.sel-caret { position: absolute; right: 5px; top: 6px; border: 4px solid transparent; border-top: 5px solid #444; border-bottom: 0; }
.op-label { margin-left: 12px; width: 55px; }
.op-input { width: 47px; height: 21px; line-height: 20px; text-align: center; background: #a9a9a9; border: 1px solid #333; }
.op-drop { position: relative; width: 18px; height: 21px; border: 1px solid #333; border-left: 0; background: #9b9b9b; }
.layer-list { flex: 1; display: flex; min-height: 0; }
.rows { flex: 1; min-width: 0; }
.layers-scroll { width: 10px; background: #a8a8a8; border-left: 1px solid #777; display: flex; flex-direction: column; justify-content: space-between; padding: 5px 0 3px; align-items: center; }
.ls-up { border: 3px solid transparent; border-bottom: 4px solid #333; border-top: 0; }
.ls-down { border: 3px solid transparent; border-top: 4px solid #333; border-bottom: 0; }
.layer-row { height: 62px; display: flex; align-items: center; border-bottom: 1px solid #5e5e5e; padding-top: 2px; }
.layer-row:last-child { border-bottom: 0; }
.layer-row.active { background: linear-gradient(#4d7098, #44658c); padding-top: 0; }
.eye-cell { width: 30px; align-self: stretch; display: flex; align-items: center; justify-content: center; }
.eye-cell.lit { background: #a0a1a1; }
.chain-cell { width: 26px; display: flex; justify-content: center; margin-right: 5px; }
.thumb-cell { width: 56px; height: 56px; flex: none; display: flex; align-items: center; justify-content: center; }
.link-cell { width: 15px; display: flex; justify-content: center; flex: none; }
.thumb-post { width: 30px; height: 23px; border: 1px solid #222; background: linear-gradient(150deg, #8a8a8a 0 18%, #444 30%, #a5a5a5 45%, #5c5c5c 58%, #9a9a9a 75%, #666 100%); }
.thumb-pat { width: 32px; height: 32px; border: 1px solid #111; display: flex; flex-direction: column; background: #aaa; }
.pat-noise { flex: 1; margin: 1px 3px 2px; background: repeating-linear-gradient(45deg, #7c7c7c 0 1px, #a4a4a4 1px 2px); }
.pat-bar { height: 7px; border-top: 1px solid #111; margin-bottom: 0; }
.mask-thumb { width: 56px; height: 56px; flex: none; background: #b5b5b5; border: 1px solid #1c1c1c; }
.lname { margin-left: 15px; white-space: nowrap; padding-top: 2px; }
.thumb-check { width: 56px; height: 56px; border: 1px solid #111; outline: 2px solid #3f8193; outline-offset: 0; background-color: #b5b5b5; background-image: linear-gradient(45deg, #8d8d8d 25%, transparent 25%, transparent 75%, #8d8d8d 75%), linear-gradient(45deg, #8d8d8d 25%, transparent 25%, transparent 75%, #8d8d8d 75%); background-size: 12px 12px; background-position: 0 0, 6px 6px; display: flex; align-items: center; justify-content: center; }
.mini { font: 700 6px "Liberation Serif", serif; color: #111; border: 1px solid #222; padding: 0 1px; white-space: nowrap; line-height: 6px; }
.lname-active { margin-left: 0; color: #a3b9d2; font-size: 12px; padding-top: 5px; }
.fx { margin-left: 14px; font: italic 700 14px "Liberation Serif", serif; color: #1f2f4a; }
.thumb-bg { width: 56px; height: 56px; background: #b5b5b5; border: 1px solid #1c1c1c; }
.lname-bg { margin-left: 0; font-style: italic; }
.bg-lock { margin-left: 21px; }

/* bottom bar */
.bottombar { height: 56px; flex: none; display: flex; background: linear-gradient(#8d8e8e, #9e9f9f); border-top: 1px solid #222; padding-right: 7px; position: relative; }
.bb { width: 61px; flex: none; display: flex; flex-direction: column; align-items: center; justify-content: flex-end; line-height: 16px; white-space: nowrap; position: relative; }
.bb > svg, .bb > .with-caret, .bb > .fx-big { margin-bottom: 5px; }
.bb > .bb-sel { margin-bottom: 1px; }
.bb-photo::after, .bb-tool::after { content: ""; position: absolute; right: 0; top: 8px; bottom: 6px; border-right: 2px dotted #333; }
.bb-photo { width: 72px; }
.bb-tool { width: 76px; }
.bb-undo, .bb-redo { width: 64px; }
.bb-rotate { width: 60px; }
.bb-layout { width: 60px; }
.bb-org { width: 62px; }
.bb-home { width: 78px; }
.bb-spacer { flex: 1; }
.bb-sel { width: 44px; height: 35px; background: #7b7c7c; border: 1px solid #666; border-radius: 3px; display: flex; align-items: center; justify-content: center; }
.bb-sel-layers { width: 37px; }
.with-caret { position: relative; display: block; line-height: 0; }
.caret-s { position: absolute; border: 4px solid transparent; border-top: 4px solid #333; border-bottom: 0; }
.rot-caret { left: 36px; top: 8px; }
.lay-caret { left: 24px; top: 24px; }
.more-caret { left: 32px; top: 6px; }
.fx-big { font: italic 700 28px/28px "Liberation Serif", serif; color: #3a6c9e; }

/* taskbar */
.taskbar { height: 40px; flex: none; display: flex; background: #141414; }
.start { width: 48px; background: #080808; display: flex; align-items: center; justify-content: center; }
.search { width: 344px; background: linear-gradient(#aaa, #a4a4a4); display: flex; align-items: center; padding-left: 11px; position: relative; }
.cortana { width: 20px; height: 20px; border: 3px solid #1a1a1a; border-radius: 50%; }
.search-text { margin-left: 9px; font-size: 14px; color: #3f3f3f; }
.mic { position: absolute; right: 15px; top: 11px; }
.tb-apps { display: flex; margin-left: 0; }
.tb-app { width: 49.500px; height: 40px; display: flex; align-items: center; justify-content: center; position: relative; }
.tb-app:first-child { width: 49px; }
.under::after { content: ""; position: absolute; left: 5px; right: 5px; bottom: 0; height: 2px; background: #6f8fae; }
.current { background: #3a3a3a; border-bottom: 2px solid #6f8fae; }
.tray { flex: 1; position: relative; color: #bdbdbd; font-size: 12px; }
.tray > svg { position: absolute; top: 13px; }
.tr-people { left: 470px; } .tr-up { left: 507px; top: 17px !important; } .tr-cloud { left: 530px; top: 15px !important; } .tr-bat { left: 555px; top: 15px !important; } .tr-wifi { left: 581px; } .tr-vol { left: 603px; }
.tr-lang { position: absolute; left: 622px; top: 2px; width: 36px; display: flex; flex-direction: column; align-items: center; line-height: 18px; }
.tr-clock { position: absolute; left: 650px; top: 2px; width: 79px; display: flex; flex-direction: column; align-items: center; line-height: 18px; }
.tr-note { position: absolute; left: 735px; top: 11px; }
.note-badge { position: absolute; left: 9px; top: 6px; width: 15px; height: 15px; border-radius: 50%; border: 1px solid #888; background: #1a1a1a; color: #bdbdbd; font-size: 10px; line-height: 13px; text-align: center; }

/* menus, over everything */
.layer-tab { position: absolute; left: 243px; top: 8px; width: 49px; height: 20px; background: #555; border: 1px solid #777; border-bottom: 0; border-radius: 3px 3px 0 0; color: #b5b5b5; text-align: center; line-height: 18px; font-size: 12px; z-index: 3; }
.menu { position: absolute; z-index: 3; background: #aeaeae; border: 1px solid #6e6e6e; box-shadow: 2px 2px 3px rgba(0,0,0,.45); color: #1a1a1a; padding-top: 2.500px; font-size: 11.400px; }
.layer-menu { left: 244px; top: 27px; width: 245px; height: 439px; }
.adj-menu { left: 483px; top: 159px; width: 172px; height: 175px; padding-top: 2px; }
.row { height: 19px; line-height: 19px; margin: 0 2px; padding-left: 16px; padding-right: 16px; position: relative; display: flex; justify-content: space-between; white-space: nowrap; }
.adj-menu .row { padding-left: 17px; }
.row kbd { font: inherit; }
.sub::after { content: ""; position: absolute; right: 7px; top: 5px; border: 4px solid transparent; border-left: 5px solid #1a1a1a; border-right: 0; }
.hl { background: #4a6d9c; color: #8fa4bf; }
.hl.sub::after { border-left-color: #a6b8cc; }
.off { color: #6b6b6b; }
.sep { height: 1px; margin: 4px 4px; background: #737373; }

/* annotations */
.annot { position: absolute; left: 0; top: 0; z-index: 4; pointer-events: none; }
.annot-line { stroke: #f9e94b; stroke-width: 5; fill: none; }
.annot-dot { fill: #fde800; }
.callout { position: absolute; z-index: 5; background: #5f96d9; border: 4px solid #f9e94b; color: #d9e8f9; white-space: nowrap; display: flex; align-items: center; justify-content: center; }
.callout-a { left: 53px; top: 67px; width: 203px; height: 37px; font-size: 17.100px; }
.callout-b { left: 647px; top: 109px; width: 162px; height: 33px; font-size: 17px; }
```
